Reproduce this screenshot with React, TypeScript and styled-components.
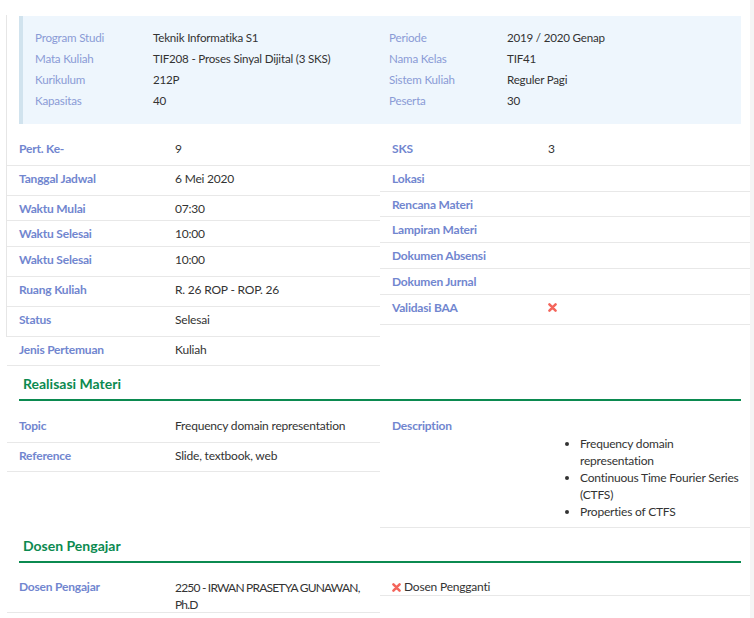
import React from "react";
import styled, { createGlobalStyle } from "styled-components";

const Global = createGlobalStyle`
  html, body { margin: 0; padding: 0; background: #fff; }
  body {
    font-family: Lato, "Liberation Sans", sans-serif;
    font-size: 12px;
    line-height: 1.42857;
    letter-spacing: -0.2px;
    color: #333;
  }
  * { box-sizing: border-box; }
`;

const Page = styled.div`
  display: flex;
  width: 754px;
  height: 618px;
  overflow: hidden;
  padding-left: 6px;
`;

const Rail = styled.div`
  flex: none;
  width: 1px;
  height: 322px;
  margin-top: 15px;
  background: #e6e6e6;
`;

const Main = styled.main`
  flex: none;
  width: 743px;
  display: flex;
  flex-direction: column;
  padding-top: 16px;
`;

const ScrollStrip = styled.div`
  flex: 1;
  background: #f5f5f5;
`;

const InfoBox = styled.section`
  margin: 0 9px 0 12px;
  background: #eef6fd;
  border-left: 4px solid #d1e3ee;
  padding: 11px 12px 13px;
  display: grid;
  grid-template-columns: 118px 236px 118px 1fr;
  font-size: 11.6px;
  line-height: 21px;
`;

const InfoLabel = styled.div`
  color: #8a9bd6;
`;

const InfoValue = styled.div`
  color: #333;
`;

const Columns = styled.div<{ $mt: number }>`
  display: flex;
  margin-top: ${(p) => p.$mt}px;
`;

const Column = styled.div<{ $w?: number }>`
  ${(p) => (p.$w ? `width: ${p.$w}px; flex: none;` : "flex: 1;")}
  display: flex;
  flex-direction: column;
`;

const Row = styled.div<{ $h: number }>`
  display: grid;
  grid-template-columns: 156px 1fr;
  height: ${(p) => p.$h}px;
  padding-top: 5px;
  border-bottom: 1px solid #e8e8e8;
  line-height: 16px;
`;

const PlainRow = styled.div<{ $h: number }>`
  height: ${(p) => p.$h}px;
  padding: 5px 12px 0;
  border-bottom: 1px solid #e8e8e8;
  line-height: 16px;
`;

const Label = styled.div`
  padding: 0 12px;
  font-weight: 700;
  color: #7186cf;
`;

const Value = styled.div<{ $lh?: number; $ls?: number }>`
  padding: 0 12px;
  color: #333;
  white-space: nowrap;
  ${(p) => (p.$lh ? `line-height: ${p.$lh}px;` : "")}
  ${(p) => (p.$ls !== undefined ? `letter-spacing: ${p.$ls}px;` : "")}
`;

const SectionHeader = styled.h3`
  margin: 8px 9px 0 12px;
  padding: 0 4px 5px;
  font-size: 14px;
  line-height: 20px;
  font-weight: 700;
  letter-spacing: 0;
  color: #0b8a50;
  border-bottom: 2px solid #0b8a50;
`;

const BulletList = styled.ul`
  margin: 17px 0 0;
  padding-left: 32px;
  line-height: 17px;
`;

const IconText = styled.span<{ $pt?: number }>`
  display: inline-flex;
  align-items: center;
  gap: 3px;
  padding-top: ${(p) => p.$pt ?? 0}px;
`;

const Cross = ({ size = 9 }: { size?: number }) => (
  <svg width={size} height={size} viewBox="0 0 10 10" style={{ display: "block" }}>
    <path d="M1.6 1.6 L8.4 8.4 M8.4 1.6 L1.6 8.4" stroke="#f4655b" strokeWidth="2.8" strokeLinecap="round" />
  </svg>
);

const info: [string, string, string, string][] = [
  ["Program Studi", "Teknik Informatika S1", "Periode", "2019 / 2020 Genap"],
  ["Mata Kuliah", "TIF208 - Proses Sinyal Dijital (3 SKS)", "Nama Kelas", "TIF41"],
  ["Kurikulum", "212P", "Sistem Kuliah", "Reguler Pagi"],
  ["Kapasitas", "40", "Peserta", "30"],
];

const leftRows: [string, React.ReactNode, number][] = [
  ["Pert. Ke-", "9", 30],
  ["Tanggal Jadwal", "6 Mei 2020", 30],
  ["Waktu Mulai", "07:30", 25],
  ["Waktu Selesai", "10:00", 26],
  ["Waktu Selesai", "10:00", 30],
  ["Ruang Kuliah", "R. 26 ROP - ROP. 26", 30],
  ["Status", "Selesai", 30],
  ["Jenis Pertemuan", "Kuliah", 29],
];

const rightRows: [string, React.ReactNode, number][] = [
  ["SKS", "3", 30],
  ["Lokasi", "", 26],
  ["Rencana Materi", "", 25],
  ["Lampiran Materi", "", 26],
  ["Dokumen Absensi", "", 26],
  ["Dokumen Jurnal", "", 26],
  ["Validasi BAA", <IconText key="x" $pt={3}><Cross /></IconText>, 30],
];

export default function App() {
  return (
    <>
      <Global />
      <Page>
        <Rail />
        <Main>
          <InfoBox>
            {info.map(([a, b, c, d]) => (
              <React.Fragment key={a}>
                <InfoLabel>{a}</InfoLabel>
                <InfoValue>{b}</InfoValue>
                <InfoLabel>{c}</InfoLabel>
                <InfoValue>{d}</InfoValue>
              </React.Fragment>
            ))}
          </InfoBox>

          <Columns $mt={12}>
            <Column $w={373}>
              {leftRows.map(([l, v, h], i) => (
                <Row key={i} $h={h}>
                  <Label>{l}</Label>
                  <Value>{v}</Value>
                </Row>
              ))}
            </Column>
            <Column>
              {rightRows.map(([l, v, h], i) => (
                <Row key={i} $h={h}>
                  <Label>{l}</Label>
                  <Value>{v}</Value>
                </Row>
              ))}
            </Column>
          </Columns>

          <SectionHeader>Realisasi Materi</SectionHeader>
          <Columns $mt={12}>
            <Column $w={373}>
              <Row $h={30}>
                <Label>Topic</Label>
                <Value>Frequency domain representation</Value>
              </Row>
              <Row $h={29}>
                <Label>Reference</Label>
                <Value>Slide, textbook, web</Value>
              </Row>
            </Column>
            <Column>
              <Row $h={115}>
                <Label>Description</Label>
                <Value>
                  <BulletList>
                    <li>Frequency domain<br />representation</li>
                    <li>Continuous Time Fourier Series<br />(CTFS)</li>
                    <li>Properties of CTFS</li>
                  </BulletList>
                </Value>
              </Row>
            </Column>
          </Columns>

          <SectionHeader>Dosen Pengajar</SectionHeader>
          <Columns $mt={11}>
            <Column $w={373}>
              <Row $h={39}>
                <Label>Dosen Pengajar</Label>
                <Value $lh={17} $ls={-0.8}>2250 - IRWAN PRASETYA GUNAWAN,<br />Ph.D</Value>
              </Row>
            </Column>
            <Column>
              <PlainRow $h={22}>
                <IconText><Cross />Dosen Pengganti</IconText>
              </PlainRow>
            </Column>
          </Columns>
        </Main>
        <ScrollStrip />
      </Page>
    </>
  );
}
